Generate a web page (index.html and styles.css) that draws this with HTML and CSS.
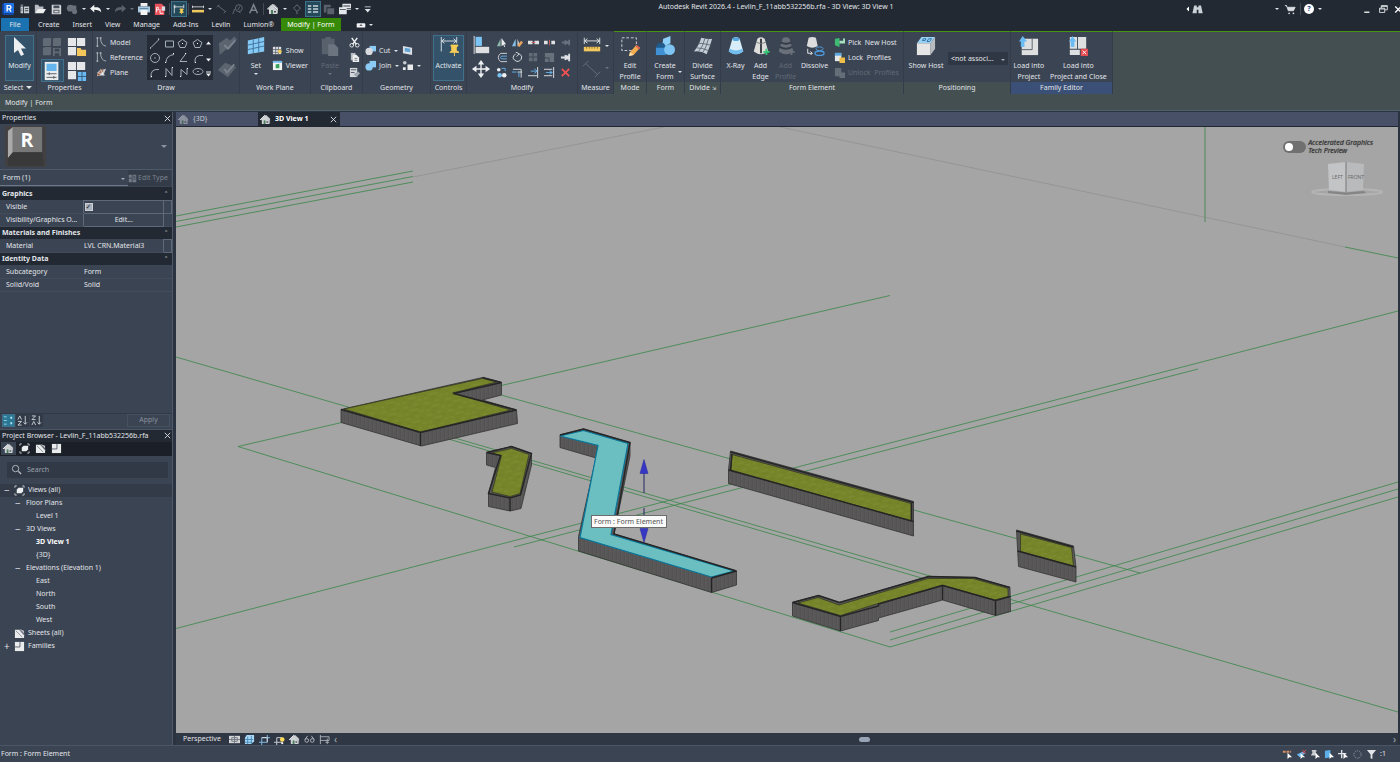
FILE: index.html
```html
<!DOCTYPE html>
<html lang="en">
<head>
<meta charset="utf-8">
<meta name="viewport" content="width=device-width, initial-scale=1">
<title>Autodesk Revit 2026.4</title>
<link rel="stylesheet" href="styles.css">
</head>
<body>
<svg class="defs" aria-hidden="true">
  <symbol id="home" viewBox="0 0 12 12"><path d="M1 6 5 2l5 5v4H2V7z" fill="#d0d3d6"/><path d="M5 2l2-1 4 4v5l-1 1V7z" fill="#a9adb2"/><path d="M4 7h2v4H4z" fill="#4c7d5c"/><path d="M7 8h2v1.500H7z" fill="#4b525c"/><path d="M0 6.500 5 1.500l5.500 5" fill="none" stroke="#fff"/></symbol>
  <symbol id="sheets" viewBox="0 0 12 12"><path d="M1 2h5l5 5v4H1z" fill="#e9ebed"/><path d="M6 1l5 5v-3z" fill="#b9bec4"/><path d="M2 3l7 7M6 2l5 6" stroke="#8a9098"/></symbol>
  <symbol id="families" viewBox="0 0 12 12"><path d="M1 1h10v10H1z" fill="#e9ebed"/><path d="M6.500 1v5.500H1" fill="none" stroke="#59616c"/></symbol>
  <symbol id="views" viewBox="0 0 12 12"><path d="M1 3V1h2M9 1h2v2M11 9v2H9M3 11H1V9" fill="none" stroke="#c4c9ce"/><path d="M3 5 5 3h5v4L8 9H3z" fill="#eceef0"/></symbol>
  <symbol id="blocks" viewBox="0 0 22 22"><path d="M1 2l2-1h7v8l-1 1H1zM12 2l2-1h7v8l-1 1h-8zM1 12l2-1h7v8l-1 1H1z"/><path d="M12 12h9v9h-9z"/><path d="M14 13h5v3h-5zM14 18h5v3h-5z" fill="#3b4453"/></symbol>
  <symbol id="cone" viewBox="0 0 20 22"><path d="M6 3q4-3 8 0l4 14q-8 6-16 0z"/></symbol>
  <symbol id="cursor" viewBox="0 0 14 20"><path d="M1 1v16l4-3 3 6 3-1.500-3-6h5z"/></symbol>
</svg>

<header class="titlebar">
  <nav class="quick" aria-label="Quick access">
    <button class="q" aria-label="Revit"><svg viewBox="0 0 14 14"><path d="M0 1h2v12l-2-1z" fill="#0d3e9e"/><path d="M2 0h12v12H2z" fill="#1f6fe5"/><path d="M0 12h2l12 0-1 2H2z" fill="#114aa8"/><path d="M6 10V3h2.500a1.800 1.800 0 0 1 0 3.800H6m2.500 0L10.500 10" fill="none" stroke="#fff" stroke-width="1.600"/></svg></button>
    <button class="q" aria-label="Home"><svg viewBox="0 0 14 14"><path d="M3 2h3v1H3zM3 4h3v8H3zM7 4h6v8H7z" fill="#c8ccd1"/><path d="M8 6.500h4M8 9h4M4 7h1M4 9h1" stroke="#2a313c"/></svg></button>
    <button class="q push" aria-label="Open"><svg viewBox="0 0 14 14"><path d="M1 12V2h4l1 2h5v3H4z" fill="#b9bdc2"/><path d="M4 7h10l-3 5H1z" fill="#eceef0"/></svg></button>
    <button class="q" aria-label="Save"><svg viewBox="0 0 14 14"><path d="M2 2h10l1 1v10H2z" fill="#d5d8db"/><path d="M4 3h7v3H4zM4 8h7v4H4z" fill="#474e59"/><path d="M5 9h5v2H5z" fill="#d5d8db"/></svg></button>
    <button class="q" aria-label="Synchronize"><svg viewBox="0 0 14 14" fill="#69717d"><circle cx="5" cy="6" r="4"/><path d="M6 3h6v5H6z"/><circle cx="10" cy="10" r="3"/></svg></button>
    <span class="dot"></span>
    <button class="q" aria-label="Undo"><svg viewBox="0 0 14 14"><path d="M5 2v3h4q4 1 4 6-2-3-8-3v3L0 6.500z" fill="#f0f2f3"/></svg></button>
    <span class="dot"></span>
    <button class="q" aria-label="Redo"><svg viewBox="0 0 14 14"><path d="M9 2v3H5Q1 6 1 11q2-3 8-3v3l5-4.500z" fill="#59616d"/></svg></button>
    <span class="dot dim"></span>
    <button class="q" aria-label="Print"><svg viewBox="0 0 14 14"><path d="M3 0h8v4H3z" fill="#eee"/><path d="M0 4h14v7H0z" fill="#aac9e0"/><path d="M3 8h8v6H3z" fill="#f4f4f4"/><path d="M2 6.500h10" stroke="#4a7998"/></svg></button>
    <button class="q" aria-label="PDF"><svg viewBox="0 0 14 14"><path d="M1 1h8l3 3v10H1z" fill="#e9525c"/><path d="M9 1v3h4v5H9z" fill="#d9dce0"/><path d="M3 11V5h2v3H3m4-1v5h4" fill="none" stroke="#fff"/></svg></button>
    <span class="bar"></span>
    <button class="q on" aria-label="Activate controls"><svg viewBox="0 0 14 14"><path d="M1.500 2v10M1 4.500h11M3 3 1.500 4.500 3 6M12.500 2v4" fill="none" stroke="#e0e4e8"/><path d="M8 7h4l-1 2 1 2H8l1-2zM10 11v2" fill="#f2cf55" stroke="#f2cf55"/></svg></button>
    <span class="bar"></span>
    <button class="q" aria-label="Measure"><svg viewBox="0 0 14 14"><path d="M0 4.500h14M.5 3v3M13.500 3v3" stroke="#ddd"/><path d="M0 8h14v3H0z" fill="#f0c860"/></svg></button>
    <span class="dot"></span>
    <button class="q" aria-label="Dimension"><svg viewBox="0 0 14 14"><path d="M2 3l9 7M1 5l3-3M9 12l3-3" stroke="#69717d" fill="none"/></svg></button>
    <button class="q" aria-label="Tag"><svg viewBox="0 0 14 14"><path d="M1 13l2-6" stroke="#69717d"/><circle cx="8" cy="6" r="4" fill="none" stroke="#69717d"/><path d="M7 8l2-4M8 10l2 2" stroke="#69717d"/></svg></button>
    <button class="q" aria-label="Text"><svg viewBox="0 0 14 14"><path d="M2 12 6.500 2 11 12M4 8.500h5" fill="none" stroke="#7a828d" stroke-width="1.800"/></svg></button>
    <span class="bar"></span>
    <button class="q" aria-label="3D view"><svg><use href="#home"/></svg></button>
    <span class="dot"></span>
    <button class="q" aria-label="Section"><svg viewBox="0 0 14 14"><path d="M7 2l4 4-4 4-4-4zM7 10v3" fill="none" stroke="#727a86"/></svg></button>
    <button class="q on" aria-label="Thin lines"><svg viewBox="0 0 14 14"><path d="M1 3.500h4M1 7h4M1 10.500h4M7 3.500h6M7 7h6M7 10.500h6" stroke="#cbd5dd" stroke-width="1.500"/></svg></button>
    <button class="q" aria-label="Close inactive"><svg viewBox="0 0 14 14" fill="#59616d"><path d="M1 2h8v3H4v6H1zM5 6h8v7H5z"/></svg></button>
    <button class="q" aria-label="Switch windows"><svg viewBox="0 0 14 14"><path d="M4 1h10v7H9v5H0V5h4z" fill="#e5e8ea"/><path d="M1 7h7v1H1zM5 3h8v1H5zM9 6h5v1H9z" fill="#313844"/></svg></button>
    <span class="dot"></span>
    <button class="q" aria-label="Customize"><svg viewBox="0 0 14 14"><path d="M2 4h7v1H2zM2 7h7l-3.500 4z" fill="#dfe2e5"/></svg></button>
  </nav>
  <h1 class="caption">Autodesk Revit 2026.4 - Levlin_F_11abb532256b.rfa - 3D View: 3D View 1</h1>
  <div class="window-tools">
    <button class="q" aria-label="Find"><svg viewBox="0 0 22 14" class="wide"><path d="M4 4v6L1 7z" fill="#fff"/><path d="M10 3h3v2h2V3h3l2 9h-5V8h-2v4H8z" fill="#cdd2d8"/></svg></button>
    <span class="search-gap"></span><span class="dot"></span>
    <button class="q" aria-label="App store"><svg viewBox="0 0 14 14"><path d="M1 3h2l2 6h6l2-4H4" fill="#d9dde2" stroke="#d9dde2"/><circle cx="6" cy="12" r="1" fill="#d9dde2"/><circle cx="11" cy="12" r="1" fill="#d9dde2"/></svg></button>
    <span class="bar"></span>
    <button class="help" aria-label="Help">?</button><span class="dot"></span>
    <span class="small-gap"></span>
    <button class="q" aria-label="Minimize"><svg viewBox="0 0 14 14"><path d="M5 10h6v1.500H5z" fill="#fff"/></svg></button>
    <button class="q" aria-label="Restore"><svg viewBox="0 0 14 14"><path d="M5 6V3h7v5H9M3 6h6v5H3zM3 7h6M5 4h7" fill="none" stroke="#e6e8eb"/></svg></button>
    <button class="q half" aria-label="Close"><svg viewBox="0 0 7 14"><path d="M2 4l7 7M2 11l7-7" stroke="#fff" stroke-width="1.500"/></svg></button>
  </div>
</header>

<nav class="menu">
  <a class="file" href="#">File</a><a href="#">Create</a><a href="#">Insert</a><a href="#">View</a><a href="#">Manage</a><a href="#">Add-Ins</a><a href="#">Levlin</a><a href="#">Lumion®</a><a class="current" href="#">Modify | Form</a>
  <button class="q" aria-label="Ribbon display"><svg viewBox="0 0 14 14"><rect x="2" y="5" width="10" height="5" rx="1" fill="#f0f2f4"/><path d="M5 8h4L7 6z" fill="#333"/></svg></button><span class="dot"></span>
</nav>

<section class="ribbon">
  <div class="panel">
    <div class="body first"><button class="big on"><svg class="art" fill="#eceef0"><use href="#cursor"/></svg>Modify</button></div>
    <h2>Select <span class="tri"></span></h2>
  </div>
  <div class="panel">
    <div class="body quad">
      <button aria-label="Family types"><svg class="art" fill="#626a76"><use href="#blocks"/></svg></button>
      <button aria-label="Family category"><svg class="art" viewBox="0 0 22 22"><path d="M1 1h9v9H1zM11 1h9v9h-9zM1 11h9v9H1z" fill="#e6e7e8"/><path d="M11 12h4l1 2h5v7H11z" fill="#f4c65c"/></svg></button>
      <button class="on" aria-label="Properties"><svg class="art" viewBox="0 0 22 22"><path d="M3 1h15v20H3z" fill="#ebeced"/><path d="M5 3h11v8H5z" fill="#64b5ee"/><path d="M5 14h11M5 18h11M8 12.500v3M13 16.500v3" stroke="#505863"/></svg></button>
      <button aria-label="Type properties"><svg class="art" viewBox="0 0 22 22"><path d="M1 1h9v9H1zM11 1h9v9h-9zM1 11h9v9H1z" fill="#e6e7e8"/><path d="M12 12h9v10h-9z" fill="#6ab9f3"/><path d="M16.500 12v10M12 17h9" stroke="#355873"/></svg></button>
    </div>
    <h2>Properties</h2>
  </div>
  <div class="panel">
    <div class="body draw">
      <div class="stack">
        <button class="line"><svg viewBox="0 0 12 12"><path d="M1.500 1v9M5 1q0 8 6 9" fill="none" stroke="#aeb4bb"/><path d="M.5 1h2M.5 10h2M4 1h2" stroke="#dce0e3"/></svg>Model</button>
        <button class="line"><svg viewBox="0 0 12 12"><path d="M1.500 1v9M5 1q0 8 6 9" fill="none" stroke="#aeb4bb"/><path d="M.5 1h2M.5 10h2M4 1h2" stroke="#dce0e3"/></svg>Reference</button>
        <button class="line"><svg viewBox="0 0 12 12"><path d="M3 4l8-2-3 7-7 1z" fill="#c9cbcd"/><path d="M1 8l6-6 1 2-5 6z" fill="#a66e55"/><path d="M1 6l9 3M5 2l3 8" stroke="#fff" stroke-width=".6"/></svg>Plane</button>
      </div>
      <svg class="gallery" viewBox="0 0 66 44" fill="none" stroke="#a4afb9" role="img" aria-label="Draw tools">
        <path d="M4 12 12 4M18.500 5.500h8v6h-8zM35.500 4l4.500 3-2 5h-5l-2-5zM50.500 4l4.500 3-2 5h-5l-2-5zM19 27q0-7 8-8M39 18l-6 8h7M48 27q-1-8 8-7M4 42q-1-9 8-8M19 41v-8l6 7v-8M34 41v-7l6 5v-6"/><circle cx="8" cy="22.500" r="4.500"/><ellipse cx="51" cy="36" rx="5" ry="3"/><path d="M3 12.500h1M11 3.500h1M35 8h1M50 8h1M7.500 22.500h1M18 27h1M26 18h1M38 18h1M48 27h1M4 41h1M18 41h1M25 32h1M33 41h1M40 33h1M50.500 36h1" stroke="#fff"/>
        <path d="M59 9h5l-2.500-3zM59 23h5l-2.500 3zM59 38h5l-2.500 3zM59 36h5v1h-5z" fill="#eef0f2" stroke="none"/>
      </svg>
      <div class="stack disabled"><svg class="art" viewBox="0 0 22 22"><path d="M2 9 11 3l3 3-2 2 7-6 3 3-8 10-4 1-7 6z" fill="#5c6470"/><path d="M8 11l4 4 8-9" fill="none" stroke="#7b838e" stroke-width="2"/></svg><svg class="art" viewBox="0 0 22 22"><path d="M1 12l8-8 12 5-9 11z" fill="#5c6470"/><path d="M8 11l3 4 8-9" fill="none" stroke="#7b838e" stroke-width="2"/></svg></div>
    </div>
    <h2>Draw</h2>
  </div>
  <div class="panel">
    <div class="body">
      <button class="big"><svg class="art" viewBox="0 0 22 22"><path d="M2 5 20 1v16L2 20z" fill="#86cbf6"/><path d="M8 3.500V19M14 2.500V18M2 10l18-4M2 15l18-4" stroke="#3d7197"/></svg>Set<span class="dot"></span></button>
      <div class="stack mid">
        <button class="line"><svg viewBox="0 0 12 12"><path d="M1 2h9v8H1z" fill="#dfe1e3"/><path d="M4 2v8M7 2v8M1 5h9M1 8h9" stroke="#69717b"/><circle cx="8.500" cy="7" r="2" fill="#f0cb58"/></svg>Show</button>
        <button class="line"><svg viewBox="0 0 12 12"><path d="M1 1h10v10H1z" fill="#f2f3f3"/><path d="M1 1h10v2H1z" fill="#6fb6ea"/><path d="M4 5l4-1v5H4z" fill="#36a15b"/></svg>Viewer</button>
      </div>
    </div>
    <h2>Work Plane</h2>
  </div>
  <div class="panel">
    <div class="body">
      <button class="big disabled"><svg class="art" viewBox="0 0 22 22"><path d="M2 3h14v17H2zM6 1h6v4H6z" fill="#59616d"/><path d="M9 9h7l4 4v9H9z" fill="#6c747f"/></svg>Paste<span class="dot dim"></span></button>
      <div class="stack top">
        <button class="line" aria-label="Cut"><svg viewBox="0 0 12 12"><path d="M3 1l5 7M9 1 4 8" stroke="#f1f2f3" stroke-width="1.600"/><circle cx="3" cy="9" r="2" fill="none" stroke="#f1f2f3"/><circle cx="9" cy="9" r="2" fill="none" stroke="#f1f2f3"/></svg></button>
        <button class="line" aria-label="Copy"><svg viewBox="0 0 12 12"><path d="M2 1h5v8H2z" fill="#b5bac0"/><path d="M4 3h4l3 3v5H4z" fill="#eceef0"/><path d="M6 7h3M6 9h3" stroke="#7b828b"/></svg></button>
        <button class="line" aria-label="Match"><svg viewBox="0 0 12 12"><path d="M1 1h8v10H1z" fill="#d6d9dc"/><path d="M2 3h6M2 6h4" stroke="#4f5763"/><path d="M5 8l5-3 2 2-4 4z" fill="#9fa6ae"/></svg></button>
      </div>
    </div>
    <h2>Clipboard</h2>
  </div>
  <div class="panel">
    <div class="body">
      <div class="stack mid">
        <button class="line"><svg viewBox="0 0 12 12"><path d="M5 1h7v6H5z" fill="#8acaf5"/><circle cx="4.500" cy="7" r="4" fill="#d8dadd"/></svg>Cut<span class="dot"></span></button>
        <button class="line"><svg viewBox="0 0 12 12" fill="#8acaf5"><path d="M5 1h7v7H5z"/><circle cx="4.500" cy="7.500" r="4"/></svg>Join<span class="dot"></span></button>
      </div>
      <div class="stack mid">
        <button class="line" aria-label="Face"><svg viewBox="0 0 12 12"><path d="M1 1l10 2v8L1 9z" fill="#dce0e4"/><path d="M3 3l6 1v4L3 7z" fill="#62a6d8"/></svg></button>
        <button class="line" aria-label="Paint"><svg viewBox="0 0 12 12"><circle cx="3" cy="3" r="2" fill="#c8ccd0"/><path d="M6 5h6v6H6zM1 8h3v3H1z" fill="#e8eaec"/></svg><span class="dot"></span></button>
      </div>
    </div>
    <h2>Geometry</h2>
  </div>
  <div class="panel">
    <div class="body"><button class="big on"><svg class="art" viewBox="0 0 22 22"><path d="M2.500 1v16M3 5.500h16M6 3 3 5.500 6 8M16 3l3 2.500L16 8M19.500 1v7" fill="none" stroke="#dfe3e8"/><path d="M13 10h8l-2 3v3l3 2H12l2-2v-3zM17 18v4" fill="#f6ce57" stroke="#f6ce57"/></svg>Activate</button></div>
    <h2>Controls</h2>
  </div>
  <div class="panel">
    <div class="body modify">
      <div class="stack"><svg class="art" viewBox="0 0 22 22"><path d="M3.500 1v20" stroke="#e3e5e7"/><path d="M5 2h7v10H5z" fill="#7bc4f4"/><path d="M5 13h15v7H5z" fill="#dedfe1"/></svg><svg class="art" viewBox="0 0 22 22"><path d="M11 4v14M4 11h14" stroke="#edf0f2" stroke-width="1.500"/><path d="M11 1l3.500 5h-7zM11 21l3.500-5h-7zM1 11l5-3.500v7zM21 11l-5-3.500v7z" fill="#edf0f2"/></svg></div>
      <div class="mod-grid">
        <svg viewBox="0 0 12 12"><path d="M5 2v8H1z" fill="#8fb9ab"/><path d="M6 1l5 7h-2l1 3H9L8 8.500 6 10z" fill="#e8eaec"/></svg>
        <svg viewBox="0 0 12 12"><path d="M4 2v8H0z" fill="#87c3eb"/><path d="M6 2l3 8H6z" fill="#d9dbdd"/><path d="M6 9l4-5 2 2-4 5z" fill="#e6a35a"/></svg>
        <svg viewBox="0 0 12 12"><path d="M0 4h5v4H0zM7 4h5v4H7z" fill="#dfe1e3"/><path d="M4 6h4" stroke="#d65b5b"/></svg>
        <svg viewBox="0 0 12 12"><path d="M0 4h4v4H0zM8 4h4v4H8z" fill="#dfe1e3"/><path d="M6 3v6" stroke="#d65b5b"/></svg>
        <svg viewBox="0 0 12 12" fill="#69717d"><path d="M2 5h3v2H2zM5 3l4 2V3h2v6H9V7L5 9z"/></svg>
        <svg viewBox="0 0 12 12" fill="none"><path d="M12 1.500H5q-5 4.500 0 9h7" stroke="#d6dade"/><path d="M12 4.500H6q-2 1.500 0 3h6" stroke="#69b6ec"/></svg>
        <svg viewBox="0 0 12 12" fill="none"><path d="M4 2q-5 4-1 7 4 3 7-1 2-4-2-6" stroke="#e5e8eb"/><path d="M4 0l4 2-3 3" stroke="#e5e8eb"/></svg>
        <svg viewBox="0 0 12 12" fill="#636b77"><path d="M1 1h4v4H1zM6 1h4v4H6zM1 6h4v4H1zM6 6h4v4H6z"/></svg>
        <svg viewBox="0 0 12 12" fill="#68707c"><path d="M1 1h10v10H6V6H1zM1 7h4v4H1z"/></svg>
        <svg viewBox="0 0 12 12" fill="#dfe2e5"><path d="M1 5h4v2H1zM5 3l4 1V2h2v8H9V8L5 9z"/></svg>
        <svg viewBox="0 0 12 12"><circle cx="3" cy="3" r="2" fill="#eceef0"/><path d="M6 1.500h4v3" fill="none" stroke="#62b2ec"/><circle cx="4" cy="9" r="2.500" fill="#78bff0"/><circle cx="9" cy="9" r="2.500" fill="#eceef0"/></svg>
        <svg viewBox="0 0 12 12" fill="none"><path d="M1 2.500h9v9M6 5.500h5" stroke="#e3e6e9"/><path d="M0 5.500h5M7.500 6v5" stroke="#5eb1ec"/></svg>
        <svg viewBox="0 0 12 12" fill="none"><path d="M10.500 0v12M0 9.500h10" stroke="#e3e6e9"/><path d="M3 4.500h7M7 2l3 2.500L7 7" stroke="#65b4eb"/></svg>
        <svg viewBox="0 0 12 12" fill="none"><path d="M10.500 0v12M0 9.500h9M0 2.500h9" stroke="#e3e6e9"/><path d="M2 6h7M6 4l3 2-3 2" stroke="#65b4eb"/></svg>
        <svg viewBox="0 0 12 12"><path d="M2 2l8 8M10 2l-8 8" stroke="#f05252" stroke-width="2"/></svg>
      </div>
    </div>
    <h2>Modify</h2>
  </div>
  <div class="panel">
    <div class="body measure">
      <div class="stack"><svg class="art" viewBox="0 0 22 22"><path d="M2.500 3v7M19.500 3v7M3 6.500h16M6 4 3 6.500 6 9M16 4l3 2.500L16 9" fill="none" stroke="#e1e4e8"/><path d="M2 13h18v5H2z" fill="#f3c860"/><path d="M5 13v2M8 13v2M11 13v2M14 13v2M17 13v2" stroke="#92712b"/></svg><svg class="art" viewBox="0 0 22 22"><path d="M4 5l13 12M1 8l6-6M14 20l6-6" fill="none" stroke="#69717d"/></svg></div>
      <div class="dots"><span class="dot"></span><span class="dot dim"></span></div>
    </div>
    <h2>Measure</h2>
  </div>

  <div class="panel ctx">
    <div class="body"><button class="big"><svg class="art" viewBox="0 0 22 22"><path d="M2 2h16v14H2z" fill="none" stroke="#d9dde1" stroke-dasharray="3 2"/><path d="M11 18l7-8 4 3-7 8-5 1z" fill="#f2ad52"/><path d="M11 18l4 3-5 1z" fill="#f7e3b1"/><path d="M18 10l4 3-1 2-4-4z" fill="#e35b50"/></svg>Edit<br>Profile</button></div>
    <h2>Mode</h2>
  </div>
  <div class="panel ctx">
    <div class="body"><button class="big"><svg class="art" viewBox="0 0 22 22"><path d="M9 3l8-3v8l-6 3H8z" fill="#8ed0f8"/><path d="M1 12h11v9H1z" fill="#3f91d3"/><path d="M3 8h7l2 5H1z" fill="#1f5b8d"/><circle cx="16" cy="15" r="6" fill="#7ec5f4"/></svg>Create<br>Form</button><span class="dot low"></span></div>
    <h2>Form</h2>
  </div>
  <div class="panel ctx">
    <div class="body"><button class="big"><svg class="art" viewBox="0 0 22 22"><path d="M9 2q8 2 12 1-2 8-6 17-6-4-14-3 6-7 8-15z" fill="#c4ced6"/><path d="M13 3q-2 9-7 14M17 3q-2 9-6 15M6 8q6 0 13 2M4 13q6 0 13 3" fill="none" stroke="#5d6c78"/></svg>Divide<br>Surface</button></div>
    <h2>Divide <span class="arrow">⇲</span></h2>
  </div>
  <div class="panel ctx">
    <div class="body elements">
      <button class="big"><svg class="art" viewBox="0 0 20 22"><use href="#cone" fill="#d7edf9"/><ellipse cx="10" cy="3.500" rx="4" ry="2" fill="#55a9df"/><path d="M3 14q7 4 14 0l1 3q-8 6-16 0z" fill="#70bdf0"/></svg>X-Ray</button>
      <button class="big"><svg class="art" viewBox="0 0 20 22"><use href="#cone" fill="#dddddc"/><path d="M10 3v16" stroke="#30343a" stroke-width="2"/><path d="M5 7q5 3 10 0" fill="none" stroke="#777"/><path d="M16 14v7M12.500 17.500h7" stroke="#35c772" stroke-width="2"/></svg>Add<br>Edge</button>
      <button class="big disabled"><svg class="art" viewBox="0 0 20 22"><use href="#cone" fill="#69707a"/><path d="M4 7q6 3 12 0M3 12q7 4 14 0" fill="none" stroke="#353d49" stroke-width="2"/><path d="M16 14v7M12.500 17.500h7" stroke="#69707a" stroke-width="2"/></svg>Add<br>Profile</button>
      <button class="big last"><svg class="art" viewBox="0 0 22 22"><path d="M4 2q4-2 8 0l2 9q-6 4-12 0z" fill="#ddd"/><path d="M3 14v5h5M6 17l2 2-2 2" fill="none" stroke="#eee"/><ellipse cx="16" cy="14" rx="4" ry="2" fill="none" stroke="#4c9be0"/><ellipse cx="16" cy="19" rx="5" ry="2.500" fill="none" stroke="#4c9be0" stroke-width="1.500"/></svg>Dissolve</button>
      <div class="stack top">
        <button class="line"><svg viewBox="0 0 12 12"><path d="M1 2l5-1v10l-5-2z" fill="#3dbb73"/><path d="M6 4h4V1l2 1v5H6" fill="#a4e0be"/></svg>Pick&nbsp; New Host</button>
        <button class="line"><svg viewBox="0 0 12 12"><path d="M1 1h7v9H1z" fill="#e5e7e9"/><path d="M1 1h7v3H1z" fill="#5aa7df"/><path d="M6 6h6v6H6z" fill="#f0bd46"/></svg>Lock&nbsp; Profiles</button>
        <button class="line disabled"><svg viewBox="0 0 12 12" fill="#656d78"><path d="M1 1h7v9H1zM6 6h6v6H6z"/></svg>Unlock&nbsp; Profiles</button>
      </div>
    </div>
    <h2>Form Element</h2>
  </div>
  <div class="panel ctx">
    <div class="body">
      <button class="big host"><svg class="art" viewBox="0 0 22 22"><path d="M1 8 6 1h15l-5 7z" fill="#9ad2f4"/><path d="M1 8h15v13H1z" fill="#e5e5e5"/><path d="M16 8l5-7v13l-5 7z" fill="#b9bcbe"/><path d="M7 5h3l1-2H8zM12 6h3l2-3h-3z" fill="none" stroke="#2d6aa0"/></svg>Show Host</button>
      <span class="pickbox host-select"><select aria-label="Host"><option>&lt;not associ...</option></select></span>
    </div>
    <h2>Positioning</h2>
  </div>
  <div class="panel ctx family">
    <div class="body">
      <button class="big"><svg class="art" viewBox="0 0 22 22"><path d="M3 3h18v18H3z" fill="#dedfe0"/><path d="M14.500 3v12H3" fill="none" stroke="#535a63"/><path d="M4 0l5 6H6v6H2V6H0z" fill="#6bbcf5"/></svg>Load into<br>Project</button>
      <button class="big grow"><svg class="art" viewBox="0 0 22 22"><path d="M2 1h8v13H2zM11 1h9v13h-9zM2 15h11v6H2z" fill="#dedfe0"/><path d="M5 0l4 6H7v6H3V6H1z" fill="#6bbcf5"/><path d="M14 14h8v8h-8z" fill="#e34b50"/><path d="M16 16l4 4M20 16l-4 4" stroke="#fff"/></svg>Load into<br>Project and Close</button>
    </div>
    <h2>Family Editor</h2>
  </div>
  <div class="ribbon-rest"></div>
</section>
<div class="options">Modify | Form</div>

<main class="workspace">
  <aside class="dock">
    <section class="properties">
      <header class="dock-head">Properties <button class="x" aria-label="Close"><svg viewBox="0 0 10 10"><path d="M2 2l6 6M8 2l-6 6" stroke="#dfe2e6"/></svg></button></header>
      <div class="type">
        <svg viewBox="0 0 42 42" role="img" aria-label="Revit"><path d="M0 0h42v42H0z" fill="#424040"/><path d="M3 5 8 1v26l-5 6z" fill="#aaa"/><path d="M8 1h30v26H8z" fill="#777"/><path d="M3 33l5-6h30l2 14H3z" fill="#3a3939"/><text x="16" y="22" class="logo-r">R</text></svg>
        <span class="tri dull"></span>
      </div>
      <div class="filter"><span class="pickbox"><select aria-label="Selection"><option>Form (1)</option></select></span><button disabled><svg viewBox="0 0 12 12"><path d="M1 1h4v4H1zM1 6h4v5H1zM6 1h5v10H6z" fill="#727a86"/><path d="M7 3h3M7 5h3M7 7h3" stroke="#343c49"/></svg>Edit Type</button></div>
      <table class="props">
        <colgroup><col class="c-name"><col><col class="c-link"></colgroup>
        <tbody>
          <tr class="group"><th colspan="2">Graphics</th><td>⌃</td></tr>
          <tr><th><label for="vis">Visible</label></th><td class="boxed"><input id="vis" type="checkbox" checked></td><td class="boxed"></td></tr>
          <tr><th>Visibility/Graphics O...</th><td class="boxed"><button>Edit...</button></td><td></td></tr>
          <tr class="group"><th colspan="2">Materials and Finishes</th><td>⌃</td></tr>
          <tr><th>Material</th><td>LVL CRN.Material3</td><td class="boxed"></td></tr>
          <tr class="group"><th colspan="2">Identity Data</th><td>⌃</td></tr>
          <tr><th>Subcategory</th><td>Form</td><td></td></tr>
          <tr><th>Solid/Void</th><td>Solid</td><td></td></tr>
        </tbody>
      </table>
      <footer class="sortbar">
        <button class="on" aria-label="Group"><svg viewBox="0 0 12 12"><path d="M1 2h3M1 6h3M1 10h3" stroke="#9fd7e6"/><path d="M8 2h2v2H8zM8 8h2v2H8z" fill="#b8e5ef"/></svg></button>
        <button aria-label="Sort A to Z"><svg viewBox="0 0 12 12"><path d="M1 5l2-4 2 4M1 7h4l-4 4h4M9 1v9M7 8l2 2 2-2" fill="none" stroke="#cdd3da"/></svg></button>
        <button aria-label="Sort Z to A"><svg viewBox="0 0 12 12"><path d="M1 1h4L1 5h4M1 11l2-4 2 4M9 1v9M7 8l2 2 2-2" fill="none" stroke="#cdd3da"/></svg></button>
        <button class="apply" disabled>Apply</button>
      </footer>
    </section>
    <section class="browser">
      <header class="dock-head">Project Browser - Levlin_F_11abb532256b.rfa <button class="x" aria-label="Close"><svg viewBox="0 0 10 10"><path d="M2 2l6 6M8 2l-6 6" stroke="#dfe2e6"/></svg></button></header>
      <nav class="browser-tabs">
        <button class="sel" aria-label="Home"><svg><use href="#home"/></svg></button><button aria-label="Views"><svg><use href="#views"/></svg></button><button aria-label="Sheets"><svg><use href="#sheets"/></svg></button><button aria-label="Families"><svg><use href="#families"/></svg></button>
      </nav>
      <label class="search"><svg viewBox="0 0 12 12"><circle cx="5" cy="5" r="3.500" fill="none" stroke="#b5bbc3"/><path d="M8 8l3 3" stroke="#b5bbc3" stroke-width="1.500"/></svg><input type="text" placeholder="Search" aria-label="Search"></label>
      <ul class="tree">
        <li class="l0 hot"><i>−</i><svg><use href="#views"/></svg>Views (all)</li>
        <li class="l1"><i>−</i>Floor Plans</li>
        <li class="l2">Level 1</li>
        <li class="l1"><i>−</i>3D Views</li>
        <li class="l2 active">3D View 1</li>
        <li class="l2">{3D}</li>
        <li class="l1"><i>−</i>Elevations (Elevation 1)</li>
        <li class="l2">East</li>
        <li class="l2">North</li>
        <li class="l2">South</li>
        <li class="l2">West</li>
        <li class="l0"><i></i><svg><use href="#sheets"/></svg>Sheets (all)</li>
        <li class="l0"><i>+</i><svg><use href="#families"/></svg>Families</li>
      </ul>
    </section>
  </aside>

  <section class="viewport">
    <nav class="view-tabs">
      <button><svg class="faded"><use href="#home"/></svg>{3D}</button>
      <button class="current"><svg><use href="#home"/></svg>3D View 1<span class="x"><svg viewBox="0 0 10 10"><path d="M2 2l6 6M8 2l-6 6" stroke="#dfe2e6"/></svg></span></button>
    </nav>
    <div class="canvas">
      <svg class="scene" viewBox="176 127 1222 606" preserveAspectRatio="xMidYMid slice" role="img" aria-label="3D View 1">
        <defs>
          <pattern id="wall" width="4" height="8" patternUnits="userSpaceOnUse"><path d="M0 0h4v8H0z" fill="#5c5a5a"/><path d="M.5 0v8M3 0v8" stroke="#504f4f" stroke-width=".7"/></pattern>
          <pattern id="grass" width="22" height="12" patternUnits="userSpaceOnUse" patternTransform="rotate(-12)"><path d="M0 0h22v12H0z" fill="#76852a"/><path d="M1 3h6M12 2h4M8 7h8M2 10h3M17 10h4" stroke="#7d8c30" stroke-width="1.500"/><path d="M6 1h4M15 5h5M2 7h3M9 10h5" stroke="#6f7e26"/></pattern>
        </defs>
        <g class="far"><path d="M664 127 413 177M780 127l565 120"/></g>
        <g class="levels"><path d="M176 216l237-45M176 221.500l237-45M176 227l237-45M1205 127v95M1345 247l53 11M238 446.500 890 295.500M238 446.500 890 647M176 357l1222 355M445 438l565 166M501 395l639 178M176 628.500 1398 311M514 547l684-178M890 632l508-150M890 640l508-151M890 647l508-150"/></g>
        <g class="solids">
          <path class="w" d="M341 409.500 482.500 377.500l19 5V395l-19 5 34 10 1 13.500L421.500 446 341 422.500z"/>
          <path class="g" d="M344 409 482.500 378.500l14 3.500-44 11 58 17-90 22z"/>
          <path class="e" d="M341 409.500l79.500 23 96-22.500-63-16.500 48-11-19-5M420.500 432.500V446"/>
          <path class="w" d="M486.500 452.500l25-6 20 7V465l-10.500 43.500-11 2.500-21.500-4.500v-13l7-26-9-2.500z"/>
          <path class="g" d="M491.500 453l20-4.500 17.500 6-9 39-10 3-18-4.500 9.500-36.500z"/>
          <path class="e" d="M486.500 452.500l14 3-12 38 21.500 4.500 10.500-3 11-41.500-20-7-25 6M510 498v13"/>
          <path class="w" d="M560 435l23.500-6 46.500 13.500V456l-16 78 122.500 37v14l-25 7.500L578.500 551v-14.500L596 458l-36-10.500z"/>
          <path class="pick" d="M560 436l23.500-5.500L628 443.500l-17 91L734 571l-22.500 6L580 537.500l18-92z"/>
          <path class="e" d="M560 435l23.500-6 46.500 13.500-16 91.500 122.500 37M711.500 578v14.500M711.500 578l25-7"/>
          <path class="w" d="M730.500 451l183 50.500V536l-185-52.500V470z"/>
          <path class="g" d="M732 454.500l179 49V521L731 470z"/>
          <path class="e" d="M728.500 470l185 51.500M732 454l-1.500 16M911.500 503v18M730.500 452l183 50.500"/>
          <path class="w" d="M1016.500 530l57 16 2.500 21v15l-57.500-15.500z"/>
          <path class="g" d="M1020.500 534l51 13.500 2 18.500-53-14.500z"/>
          <path class="e" d="M1017.500 551l58.500 16M1016.500 531l57 16"/>
          <path class="w" d="M792.500 602.500l26-7 21 7 89-26 46.500 1 35 10 .5 24-15 4-53-15.500-64 18v2.500l-38 10.500-48-15z"/>
          <path class="g" d="M798 603l20-5.500 21 7.500 89-26.500h45l35 10v8l-13 3.500-52.500-15-69.500 20-32.500 10.500z"/>
          <path class="e" d="M792.500 602.500l48 14 38-10.500v-2l64-18.500 53 15 15-4M840.500 617v14M942.500 585.500V600M995.500 600.500v15M792.500 602.500l26-7 21 7 89-26 46.500 1 35 10"/>
        </g>
        <path class="grip" d="M644 493v-20M644 508v20"/><path class="head" d="M644 459.500l4 14h-8zM644 542.500l4-14h-8z"/>
        <rect x="591.500" y="515.500" width="75" height="12" fill="#fafafa" stroke="#6c6c6c"/><text class="tip" x="594" y="524">Form : Form Element</text>
      </svg>
      <label class="accel"><input type="checkbox"><span>Accelerated Graphics<br>Tech Preview</span></label>
      <svg class="cube" viewBox="0 0 76 38" role="img" aria-label="View cube"><ellipse cx="38" cy="31" rx="35" ry="3" fill="none" stroke="#b4b4b4" stroke-width="2"/><path d="M19 30l18 1.500L55 30l2 2-20 2-18-2z" fill="#858585"/><path d="M19 3l18-2v30l-17-2z" fill="#c3c4c6"/><path d="M37 1l18 2-1 26-17 2z" fill="#b9babc"/><path d="M37 1v30" stroke="#777"/><text x="23" y="18">LEFT</text><text x="39" y="18">FRONT</text></svg>
    </div>
    <footer class="viewbar">
      <span class="scale">Perspective</span>
      <svg viewBox="0 0 12 12"><path d="M0 2h12v8H0z" fill="#d3d5d7"/><path d="M3 4h6v4H3zM0 6h12M6 2v8" fill="none" stroke="#707781"/></svg>
      <svg viewBox="0 0 12 12"><path d="M3 1h8v7L8 11H1V4z" fill="#a9d7f4"/><path d="M1 6h9M1 9h8M4 3v8M8 2v9" stroke="#4588ba"/></svg>
      <svg viewBox="0 0 12 12"><path d="M0 9h9V1M3 12V4h9" fill="none" stroke="#86c4f1"/><path d="M3 4h6v5" fill="none" stroke="#ddd"/></svg>
      <svg viewBox="0 0 12 12"><path d="M0 9h9M3 12V4h6" fill="none" stroke="#d2d6da"/><circle cx="9" cy="6" r="2.500" fill="#ffdc56"/><path d="M8 9h2v2H8z" fill="#fff"/></svg>
      <svg><use href="#home"/></svg>
      <svg viewBox="0 0 12 12" fill="none" stroke="#b3bac2"><circle cx="3" cy="7" r="2"/><circle cx="9" cy="7" r="2"/><path d="M1 6l3-4M11 6 8 2"/></svg>
      <svg viewBox="0 0 12 12" fill="none" stroke="#a9b0b8"><path d="M1.500 1v10M1 3h10v4H1M9 5v6M7 9h4"/></svg>
      <span class="chev">‹</span><span class="thumb"></span><span class="chev end">›</span>
    </footer>
  </section>
</main>
<footer class="status"><span>Form : Form Element</span>
  <div>
    <svg viewBox="0 0 12 12"><path d="M1 3h9" stroke="#d89066" stroke-width="2" stroke-dasharray="3 1"/><path d="M6 4v7l2-2h3z" fill="#fff"/></svg>
    <svg viewBox="0 0 12 12"><path d="M1 6l6-3 3 2-6 4z" fill="#6cb7eb"/><path d="M7 1l4 4M11 1 7 5" stroke="#e45555"/><path d="M5 5v6l2-2h3z" fill="#fff"/></svg>
    <svg viewBox="0 0 12 12"><path d="M2 1h5v2H6l2 4H1l2-4H2z" fill="#c9cdd1"/><path d="M6 4v7l2-2h3z" fill="#fff"/></svg>
    <svg viewBox="0 0 12 12"><path d="M1 2l6-1v8l-6 1z" fill="#5bb0e9"/><path d="M6 4v7l2-2h3z" fill="#fff"/></svg>
    <svg viewBox="0 0 12 12"><path d="M4 1v9M0 5h9" stroke="#dfe2e5" stroke-width="1.500"/><path d="M6 4v7l2-2h3z" fill="#fff"/></svg>
    <svg viewBox="0 0 12 12"><circle cx="6" cy="6" r="4" fill="none" stroke="#8c949f" stroke-dasharray="1.500 1"/></svg>
    <svg viewBox="0 0 12 12"><path d="M1 1h10L7 6v5l-2-1V6z" fill="#e3e6e9"/></svg><span>:1</span>
  </div>
</footer>
</body>
</html>
```
FILE: styles.css
```css
* { box-sizing: border-box; }
:root { --panel: #3b4453; --dark: #222933; --green: #434f50; --text: #e2e5e9; }
body { margin: 0; height: 100vh; display: flex; flex-direction: column; overflow: hidden; background: var(--panel); color: var(--text); font: 7px/10px "Noto Sans", "Open Sans", sans-serif; }
button, input, select { margin: 0; padding: 0; border: 0; background: none; color: inherit; font: inherit; }
h1, h2, ul { margin: 0; padding: 0; font: inherit; list-style: none; }
a { color: inherit; text-decoration: none; }
svg { display: block; width: 11px; height: 11px; flex: none; }
.defs { position: absolute; width: 0; height: 0; }

.titlebar { display: grid; grid-template-columns: 13fr auto 10fr; height: 17px; flex: none; background: var(--dark); }
.quick { display: flex; align-items: center; gap: 2px; padding-left: 1px; }
.q { width: 14px; height: 14px; flex: none; display: grid; place-items: center; }
.q svg { width: 12px; height: 12px; }
.q svg.wide { width: 22px; }
.q.on { background: #24495a; outline: 1px solid #3c7189; outline-offset: 0; }
.q.half { width: 7px; }
.q.half svg { width: 7px; }
.dot { width: 4px; height: 2px; flex: none; margin: 0 1px; border: 2px solid transparent; border-top-color: #dfe2e6; border-bottom: 0; }
.dot.dim { border-top-color: #6c7480; }
.dot.low { margin: 36px 0 0 -5px; }
.bar { width: 1px; height: 12px; background: #434b58; }
.caption { line-height: 14px; white-space: nowrap; }
.window-tools { display: flex; align-items: center; justify-content: flex-end; gap: 3px; }
.search-gap { width: 70px; }
.small-gap { width: 30px; }
.help { width: 10px; height: 10px; border-radius: 50%; background: #fff; color: #26428b; font-weight: 700; }

.menu { display: flex; align-items: center; gap: 13px; height: 14px; flex: none; background: var(--dark); padding: 1px 0 0 1px; line-height: 13px; }
.menu .file { width: 28px; margin-right: -4px; background: #1b72b0; text-align: center; height: 13px; }
.menu .current { padding: 0 6px; margin-left: -6px; height: 13px; background: #378a07; color: #fff; }
.menu .dot { margin-left: -12px; }

.ribbon { display: grid; grid-template-columns: 37px 56px 147px 71px 52px 68px 36px 111px 36px 33px 38px 36px 183px 107px 102px 1fr; height: 63px; flex: none; border-bottom: 1px solid #2c3442; }
.panel { min-width: 0; display: flex; flex-direction: column; border-right: 1px solid #343c49; border-top: 1px solid #39414e; background: var(--panel); }
.panel h2 { height: 12px; line-height: 12px; text-align: center; white-space: nowrap; }
.panel.ctx, .ribbon-rest { border-top: 1px solid #4a9312; }
.ctx h2, .ribbon-rest { background: var(--green); }
.family h2 { background: #3a5076; }
.body { flex: 1; min-height: 0; display: flex; padding: 3px 2px 0; gap: 2px; white-space: nowrap; }
.body.first { padding-left: 5px; }
.art { width: 20px; height: 20px; }
.big { flex: 1; height: 46px; display: flex; flex-direction: column; align-items: center; line-height: 11px; padding-top: 1px; }
.big .art { margin-bottom: 4px; }
.big .dot { margin-top: 2px; }
.on { background: #34536a; outline: 1px solid #41708b; outline-offset: -1px; }
.disabled { color: #626a76; }
.tri { display: inline-block; border: 3px solid transparent; border-top-color: #e5e8eb; border-bottom: 0; margin: 0 0 1px 1px; }
.tri.dull { border-top-color: #8b939e; margin-right: 3px; }
.quad { display: grid; grid-template: 23px 23px / 23px 23px; justify-content: center; gap: 1px 2px; }
.quad button { display: grid; place-items: center; }
.stack { display: flex; flex-direction: column; flex: none; gap: 4px; }
.measure { padding-left: 4px; }
.dots { display: flex; flex-direction: column; gap: 20px; padding-top: 10px; }
.draw { padding-left: 3px; justify-content: space-between; }
.draw .stack:first-child, .stack.top { gap: 4px; padding-top: 2px; }
.stack.mid { padding-top: 10px; gap: 4px; }
.line { height: 11px; display: flex; align-items: center; gap: 3px; }
.gallery { width: 66px; height: 45px; background: #252c38; }
.modify { padding-left: 4px; gap: 5px; }
.mod-grid { display: grid; grid-template: repeat(3, 11px) / repeat(5, 11px); gap: 4px 5px; padding-top: 2px; }
.arrow { font-size: 5px; }
.elements { gap: 0; }
.elements .big { flex: none; width: 25px; }
.elements .big.last { width: 33px; }
.elements .stack { padding-left: 3px; }
.host { flex: none; width: 40px; }
.pickbox { flex: 1; min-width: 0; position: relative; }
.pickbox select { appearance: none; display: block; width: 100%; height: 100%; }
.pickbox::after { content: ""; position: absolute; right: 3px; top: 50%; border: 2px solid transparent; border-top-color: #a6aeb8; border-bottom: 0; }
.host-select { height: 13px; margin-top: 17px; padding-left: 3px; background: #303744; }
.grow { flex: 2; }
.options { height: 17px; flex: none; padding-left: 5px; line-height: 17px; background: var(--green); border-bottom: 1px solid #4e6069; }

.workspace { flex: 1; min-height: 0; display: grid; grid-template-columns: 173px 1fr; gap: 3px; padding: 1px 2px 0 0; background: #2b3340; }
.dock { display: flex; flex-direction: column; min-height: 0; background: var(--panel); border-right: 1px solid #4d5869; }
.dock-head { display: flex; justify-content: space-between; align-items: center; height: 12px; flex: none; line-height: 12px; padding: 0 0 0 2px; background: var(--dark); white-space: nowrap; }
.x svg { width: 9px; height: 9px; }
.properties { display: flex; flex-direction: column; flex: 317 1 0; }
.type { display: flex; justify-content: space-between; align-items: center; height: 46px; padding: 0 2px 0 5px; border-bottom: 1px solid #4e596a; }
.type svg { width: 41px; height: 41px; }
.logo-r { font: 700 20px "Open Sans", sans-serif; fill: #fff; }
.filter { display: flex; height: 16px; margin-bottom: 1px; padding-right: 1px; }
.filter select { border-bottom: 1px solid #6c7887; padding-left: 3px; }
.filter button { width: 43px; display: flex; align-items: center; gap: 1px; color: #7a828e; background: #343c49; white-space: nowrap; }
.filter svg { width: 9px; height: 9px; }
.props { width: 100%; border-collapse: collapse; table-layout: fixed; }
.c-name { width: 83px; }
.c-link { width: 8px; }
.props tr { height: 13px; }
.props th, .props td { padding: 0; height: 13px; text-align: left; font-weight: 400; line-height: 11px; border-bottom: 1px solid #424c5b; white-space: nowrap; }
.props th { padding-left: 6px; }
.props td { padding-left: 1px; }
.props td:last-child { padding: 0; }
.props .group > * { background: var(--dark); font-weight: 700; border: 0; }
.props .group td { color: #b0b6be; font-size: 5px; line-height: 5px; }
.props .group th { padding-left: 2px; }
.props .boxed { border: 1px solid #5d6878; }
.props button { display: block; width: 100%; text-align: center; }
.props input { appearance: none; display: block; width: 8px; height: 8px; border: 1px solid #cbd0d6; background: #aab1ba; }
.props input:checked::after { content: "✓"; display: block; color: #202630; font: 700 7px/6px "DejaVu Sans", sans-serif; }
.sortbar { display: flex; margin-top: auto; height: 16px; padding: 0 2px 2px; border-top: 1px solid #303946; gap: 1px; }
.sortbar > button { width: 13px; height: 13px; display: grid; place-items: center; background: #323a47; }
.sortbar > button.on { background: #2b7896; }
.sortbar .apply { width: 43px; margin-left: auto; border: 1px solid #465160; background: none; color: #8a929d; }
.browser { flex: 316 1 0; border-top: 1px solid #4b5565; min-height: 0; }
.browser-tabs { display: flex; height: 14px; background: #1b2028; padding: 0 1px 1px; gap: 1px; }
.browser-tabs button { width: 15px; display: grid; place-items: center; }
.browser-tabs .sel { background: #3a4453; }
.search { display: flex; align-items: center; height: 16px; margin: 6px 4px 6px 7px; padding-left: 4px; gap: 5px; background: #313946; }
.search input { flex: 1; min-width: 0; }
.search input::placeholder { color: #9ba3ad; opacity: 1; }
.tree li { display: flex; align-items: center; height: 13px; white-space: nowrap; }
.tree i { width: 14px; padding-left: 4px; font: 10px/10px "Open Sans", sans-serif; }
.tree svg { margin-right: 3px; }
.tree .hot { background: #343b48; }
.tree .l1 { padding-left: 11px; }
.tree .l1 i { width: 15px; }
.tree .l2 { padding-left: 36px; }
.active { font-weight: 700; color: #fff; }

.viewport { display: flex; flex-direction: column; min-width: 0; }
.view-tabs { display: flex; height: 14px; flex: none; background: #475066; }
.view-tabs button { width: 82px; display: flex; align-items: center; gap: 4px; padding: 0 2px; color: #c6cbd2; }
.view-tabs .current { background: var(--dark); color: #fff; font-weight: 700; }
.view-tabs .current .x { margin-left: auto; }
.view-tabs .faded { opacity: .5; }
.canvas { flex: 1; min-height: 0; position: relative; background: #a5a5a5; border-top: 1px solid #202731; }
.scene { width: 100%; height: 100%; }
.far { fill: none; stroke: #8e8e8e; stroke-width: .7; }
.levels { fill: none; stroke: #398747; stroke-width: .8; }
.w { fill: url(#wall); stroke: #343333; stroke-width: .8; }
.g { fill: url(#grass); stroke: #30341d; stroke-width: .7; }
.e { fill: none; stroke: #252525; stroke-width: 1.4; }
.pick { fill: #6bbfc0; stroke: #08759b; stroke-width: 1.2; }
.grip { fill: none; stroke: #242466; }
.head { fill: #3737c5; stroke: #2525a1; stroke-width: .5; }
.tip { fill: #555; font: 7px "Noto Sans", sans-serif; }
.accel { position: absolute; top: 12px; right: 25px; display: flex; align-items: center; gap: 2px; color: #303030; font-size: 7px; font-style: italic; line-height: 8px; text-shadow: 0 0 1px #555; }
.accel input { appearance: none; width: 23px; height: 12px; padding: 2px; border-radius: 6px; background: #707070; }
.accel input::before { content: ""; display: block; width: 8px; height: 8px; border-radius: 50%; background: #fff; }
.cube { position: absolute; top: 34px; right: 13px; width: 76px; height: 38px; font: 5px "Open Sans", sans-serif; fill: #666; }
.viewbar { display: flex; align-items: center; height: 12px; flex: none; gap: 4px; padding: 0 2px 0 7px; background: #303744; }
.scale { margin-right: 4px; }
.chev { font-size: 10px; color: #a2aab4; }
.thumb { width: 11px; height: 5px; margin: 0 auto; border-radius: 3px; background: #98a4b5; }
.status { display: flex; align-items: center; justify-content: space-between; height: 17px; flex: none; padding: 0 14px 0 1px; border-top: 1px solid #4a5566; }
.status div { display: flex; align-items: center; gap: 3px; }
```
